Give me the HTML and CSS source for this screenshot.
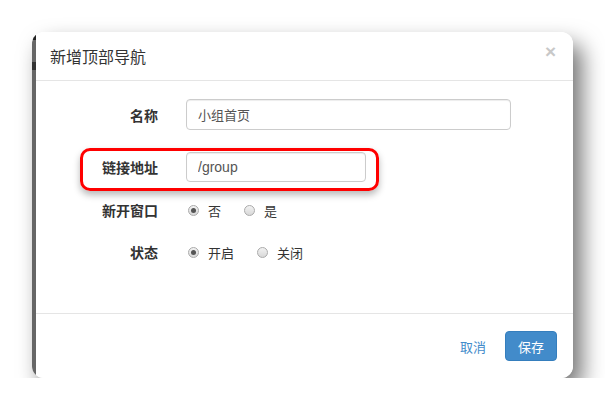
FILE: index.html
```html
<!DOCTYPE html>
<html lang="zh-CN">
<head>
  <meta charset="UTF-8">
  <title>新增顶部导航</title>
  <link rel="stylesheet" href="styles.css">
</head>
<body>
  <div class="frame">
    <div class="page-edge"></div>

    <div class="modal">
      <div class="modal-header">
        <h4>新增顶部导航</h4>
        <span class="close">&times;</span>
      </div>

      <form class="modal-body">
        <div class="row">
          <label class="row-label">名称</label>
          <input class="field wide" type="text" value="小组首页">
        </div>

        <div class="row highlight">
          <label class="row-label">链接地址</label>
          <input class="field narrow" type="text" value="/group">
        </div>

        <div class="row radios">
          <label class="row-label">新开窗口</label>
          <span class="radio checked"></span><span class="radio-text">否</span>
          <span class="radio"></span><span class="radio-text">是</span>
        </div>

        <div class="row radios">
          <label class="row-label">状态</label>
          <span class="radio checked"></span><span class="radio-text">开启</span>
          <span class="radio"></span><span class="radio-text">关闭</span>
        </div>
      </form>

      <div class="modal-footer">
        <button class="btn-link" type="button">取消</button>
        <button class="btn-primary" type="button">保存</button>
      </div>
    </div>
  </div>
</body>
</html>
```

FILE: styles.css
```css
body {
  margin: 0;
  padding: 32px 0 0 32px;
  background-color: #fff;
  font-family: 'Noto Sans CJK SC', 'Liberation Sans', sans-serif;
  color: #333;
}

.frame {
  display: flex;
  width: 541px;
  height: 346px;
  border-radius: 12px;
  overflow: hidden;
  background-color: #fff;
  box-shadow: 9px 12px 22px rgba(0, 0, 0, 0.55);
}

.page-edge {
  width: 4px;
  background-color: #666;
  background-image: linear-gradient(#222 0, #222 8px, transparent 8px, transparent 30px, #333 30px, #333 38px, transparent 38px);
}

.modal {
  flex: 1;
  display: flex;
  flex-direction: column;
  background-color: #fff;
}

.modal-header {
  display: flex;
  justify-content: space-between;
  align-items: center;
  height: 48px;
  padding: 0 17px 0 14px;
  border-bottom: 1px solid #e5e5e5;
}

.modal-header h4 {
  margin: 0;
  font-size: 16px;
  font-weight: normal;
  color: #333;
}

.close {
  font-family: 'Liberation Sans', sans-serif;
  font-size: 19px;
  font-weight: bold;
  color: #c8c8c8;
  margin-top: -8px;
}

.modal-body {
  flex: 1;
  margin: 0;
  padding: 13px 0 0 44px;
}

.row {
  display: flex;
  align-items: center;
  border: 3px solid transparent;
  padding: 2px 10px 4px 0;
  margin-bottom: 11px;
}

.row.highlight {
  display: inline-flex;
  padding: 1px 10px 6px 0;
  border-color: #f00;
  border-radius: 10px;
  box-shadow: 0 4px 7px rgba(0, 0, 0, 0.28);
  margin-bottom: 3px;
}

.row.radios {
  height: 26px;
  padding: 0;
  margin-bottom: 10px;
}

.row-label {
  width: 75px;
  text-align: right;
  margin-right: 28px;
  font-size: 14px;
  font-weight: bold;
  color: #333;
}

.field {
  box-sizing: border-box;
  height: 31px;
  padding: 0 11px;
  border: 1px solid #ccc;
  border-radius: 4px;
  font-family: 'Noto Sans CJK SC', 'Liberation Sans', sans-serif;
  font-size: 13px;
  color: #555;
  box-shadow: inset 0 1px 1px rgba(0, 0, 0, 0.075);
}

.field.wide {
  width: 325px;
}

.field.narrow {
  width: 180px;
  height: 30px;
  font-family: 'Liberation Sans', 'Noto Sans CJK SC', sans-serif;
  font-size: 14px;
}

.radio {
  box-sizing: border-box;
  width: 11px;
  height: 11px;
  margin-left: 2px;
  border: 1px solid #aaa;
  border-radius: 50%;
  background: linear-gradient(#f2f2f2, #d8d8d8);
  display: flex;
  align-items: center;
  justify-content: center;
}

.radio.checked::after {
  content: "";
  width: 5px;
  height: 5px;
  border-radius: 50%;
  background-color: #555;
}

.radio-text {
  margin-left: 9px;
  margin-right: 21px;
  font-size: 13px;
  color: #333;
}

.modal-footer {
  display: flex;
  justify-content: flex-end;
  align-items: center;
  height: 64px;
  padding: 0 16px;
  border-top: 1px solid #e5e5e5;
}

.btn-link {
  background: none;
  border: none;
  padding: 0;
  margin-right: 19px;
  font-family: 'Noto Sans CJK SC', sans-serif;
  font-size: 13px;
  color: #428bca;
}

.btn-primary {
  height: 30px;
  padding: 0 12px;
  border: 1px solid #357ebd;
  border-radius: 4px;
  background-color: #428bca;
  color: #fff;
  font-family: 'Noto Sans CJK SC', sans-serif;
  font-size: 13px;
}
```
